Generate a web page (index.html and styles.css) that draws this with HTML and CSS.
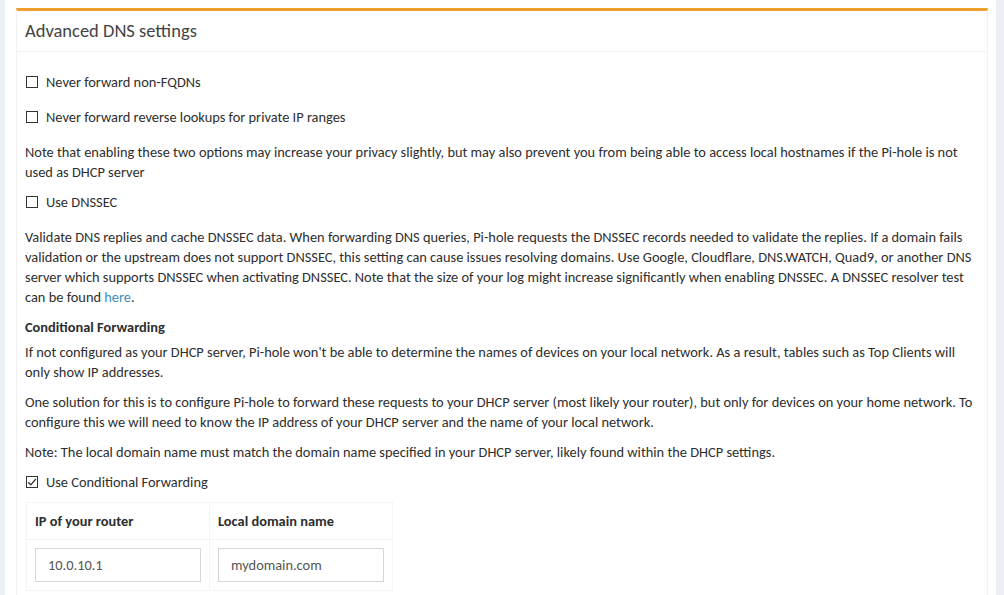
FILE: index.html
```html
<!DOCTYPE html>
<html lang="en">
<head>
<meta charset="utf-8">
<title>Advanced DNS settings</title>
<link rel="stylesheet" href="styles.css">
</head>
<body>
<div class="wrapper">
  <div class="box">
    <div class="box-header">
      <h3 class="box-title">Advanced DNS settings</h3>
    </div>
    <div class="box-body">
      <div class="checkbox first"><label><span class="cb"></span>Never forward non-FQDNs</label></div>
      <div class="checkbox"><label><span class="cb"></span>Never forward reverse lookups for private IP ranges</label></div>
      <p class="gap15">Note that enabling these two options may increase your privacy slightly, but may also prevent you from being able to access local hostnames if the Pi-hole is not used as DHCP server</p>
      <div class="checkbox tight"><label><span class="cb"></span>Use DNSSEC</label></div>
      <p class="gap15">Validate DNS replies and cache DNSSEC data. When forwarding DNS queries, Pi-hole requests the DNSSEC records needed to validate the replies. If a domain fails validation or the upstream does not support DNSSEC, this setting can cause issues resolving domains. Use Google, Cloudflare, DNS.WATCH, Quad9, or another DNS server which supports DNSSEC when activating DNSSEC. Note that the size of your log might increase significantly when enabling DNSSEC. A DNSSEC resolver test can be found <a href="#">here</a>.</p>
      <h4 class="section">Conditional Forwarding</h4>
      <p>If not configured as your DHCP server, Pi-hole won't be able to determine the names of devices on your local network. As a result, tables such as Top Clients will only show IP addresses.</p>
      <p>One solution for this is to configure Pi-hole to forward these requests to your DHCP server (most likely your router), but only for devices on your home network. To configure this we will need to know the IP address of your DHCP server and the name of your local network.</p>
      <p>Note: The local domain name must match the domain name specified in your DHCP server, likely found within the DHCP settings.</p>
      <div class="checkbox tight"><label><span class="cb checked"><svg viewBox="0 0 12 12" width="12" height="12"><path d="M2.2 6.2 L4.8 8.8 L9.8 3" fill="none" stroke="#333" stroke-width="1.3"/></svg></span>Use Conditional Forwarding</label></div>
      <table class="cf-table">
        <thead>
          <tr><th>IP of your router</th><th>Local domain name</th></tr>
        </thead>
        <tbody>
          <tr>
            <td><input class="form-control" type="text" value="10.0.10.1"></td>
            <td><input class="form-control" type="text" value="mydomain.com"></td>
          </tr>
        </tbody>
      </table>
    </div>
  </div>
</div>
</body>
</html>
```
FILE: styles.css
```css
html, body {
  margin: 0;
  padding: 0;
}
body {
  background: #ecf0f5;
  font-family: "Carlito", "Lato", sans-serif;
  font-size: 14.4px;
  line-height: 20px;
  color: #2e2e2e;
}
.wrapper {
  background: #fff;
  margin: 0 8px 0 5px;
  padding: 8px 8px 0 11px;
  height: 595px;
  box-sizing: border-box;
  overflow: hidden;
}
.box {
  border-top: 3px solid #ef9f2d;
  border-left: 1px solid #f2f2f2;
  border-right: 1px solid #f2f2f2;
  background: #fff;
}
.box-header {
  padding: 10px 8px;
  border-bottom: 1px solid #f1f1f1;
}
.box-title {
  margin: 0;
  font-size: 18.5px;
  font-weight: normal;
  line-height: 20px;
  color: #444;
}
.box-body {
  padding: 10px 8px;
}
.checkbox {
  margin: 15px 0;
}
.checkbox.first {
  margin-top: 10px;
}
.checkbox.tight {
  margin: 10px 0;
}
.checkbox label {
  display: flex;
  align-items: center;
  cursor: pointer;
}
.cb {
  width: 10px;
  height: 10px;
  border: 1px solid #333;
  margin: 0 8px 0 1px;
  flex: none;
  position: relative;
}
.cb svg {
  position: absolute;
  left: -1px;
  top: -1px;
}
p {
  margin: 0 0 10px;
}
p.gap15 {
  margin-top: 15px;
}
.section {
  margin: 10px 0 5px;
  font-size: 14.4px;
  font-weight: bold;
  line-height: 20px;
}
a {
  color: #3c8dbc;
  text-decoration: none;
}
.cf-table {
  border-collapse: collapse;
  margin: 10px 0 0 1px;
}
.cf-table th,
.cf-table td {
  border: 1px solid #f4f4f4;
  padding: 8px;
  width: 166px;
  text-align: left;
}
.cf-table th {
  font-weight: bold;
}
.form-control {
  display: block;
  box-sizing: border-box;
  width: 166px;
  height: 34px;
  padding: 6px 12px;
  border: 1px solid #d2d6de;
  font-family: inherit;
  font-size: 14.4px;
  color: #555;
  margin: 0;
}
```
